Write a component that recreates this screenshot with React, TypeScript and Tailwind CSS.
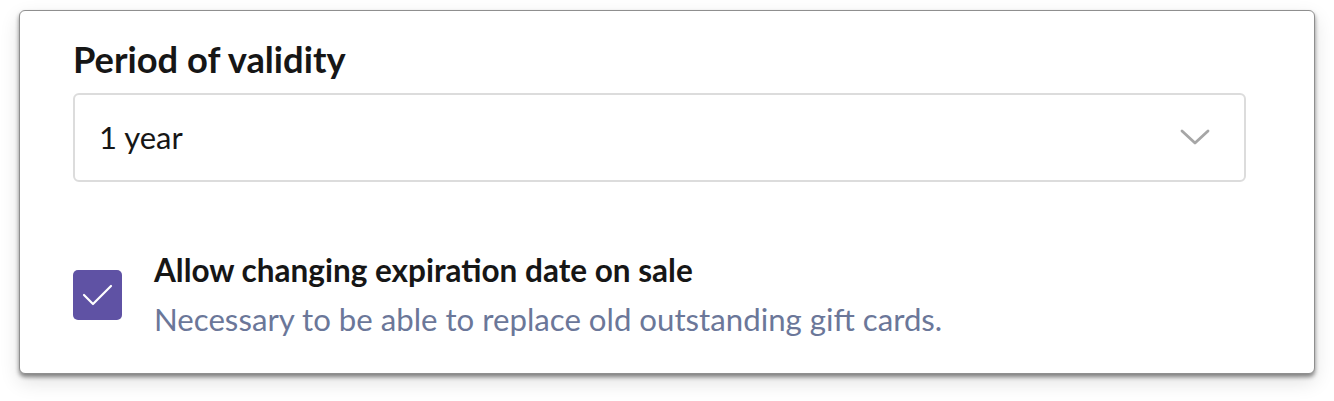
export default function App() {
  return (
    <div className="min-h-screen bg-white px-[19px] pt-[10px] font-['Lato',sans-serif]">
      <div className="h-[364px] rounded-[6px] border border-[#8f8f8f] bg-white pl-[53px] pr-[68px] pt-[26px] shadow-[0_3px_4px_rgba(0,0,0,0.45),0_8px_20px_rgba(0,0,0,0.12)]">
        {/* Period select */}
        <h2 className="text-[36.3px] font-bold leading-[44px] text-[#161616]">Period of validity</h2>
        <div className="mt-[12px] flex h-[89px] items-center justify-between rounded-[6px] border-2 border-[#dcdcdc] pl-[24px] pr-[34px]">
          <span className="text-[31px] text-[#161616]">1 year</span>
          <svg width="30" height="17" viewBox="0 0 30 17" fill="none">
            <polyline points="2,2 15,14 28,2" stroke="#a6a6a6" strokeWidth="2.8" strokeLinecap="round" strokeLinejoin="round" />
          </svg>
        </div>

        {/* Expiration checkbox */}
        <div className="mt-[68px] flex items-center gap-[32px]">
          <div className="h-[50px] w-[49px] flex-shrink-0 rounded-[5px] bg-[#5f52a4]">
            <svg width="49" height="50" viewBox="0 0 49 50" fill="none">
              <polyline points="11,25 20,34 38,16" stroke="white" strokeWidth="2.2" strokeLinecap="round" strokeLinejoin="round" />
            </svg>
          </div>
          <div className="flex flex-col">
            <span className="text-[31.5px] font-bold leading-[40px] text-[#161616]">Allow changing expiration date on sale</span>
            <span className="mt-[9px] text-[31.2px] leading-[40px] text-[#6b7799]">Necessary to be able to replace old outstanding gift cards.</span>
          </div>
        </div>
      </div>
    </div>
  );
}
